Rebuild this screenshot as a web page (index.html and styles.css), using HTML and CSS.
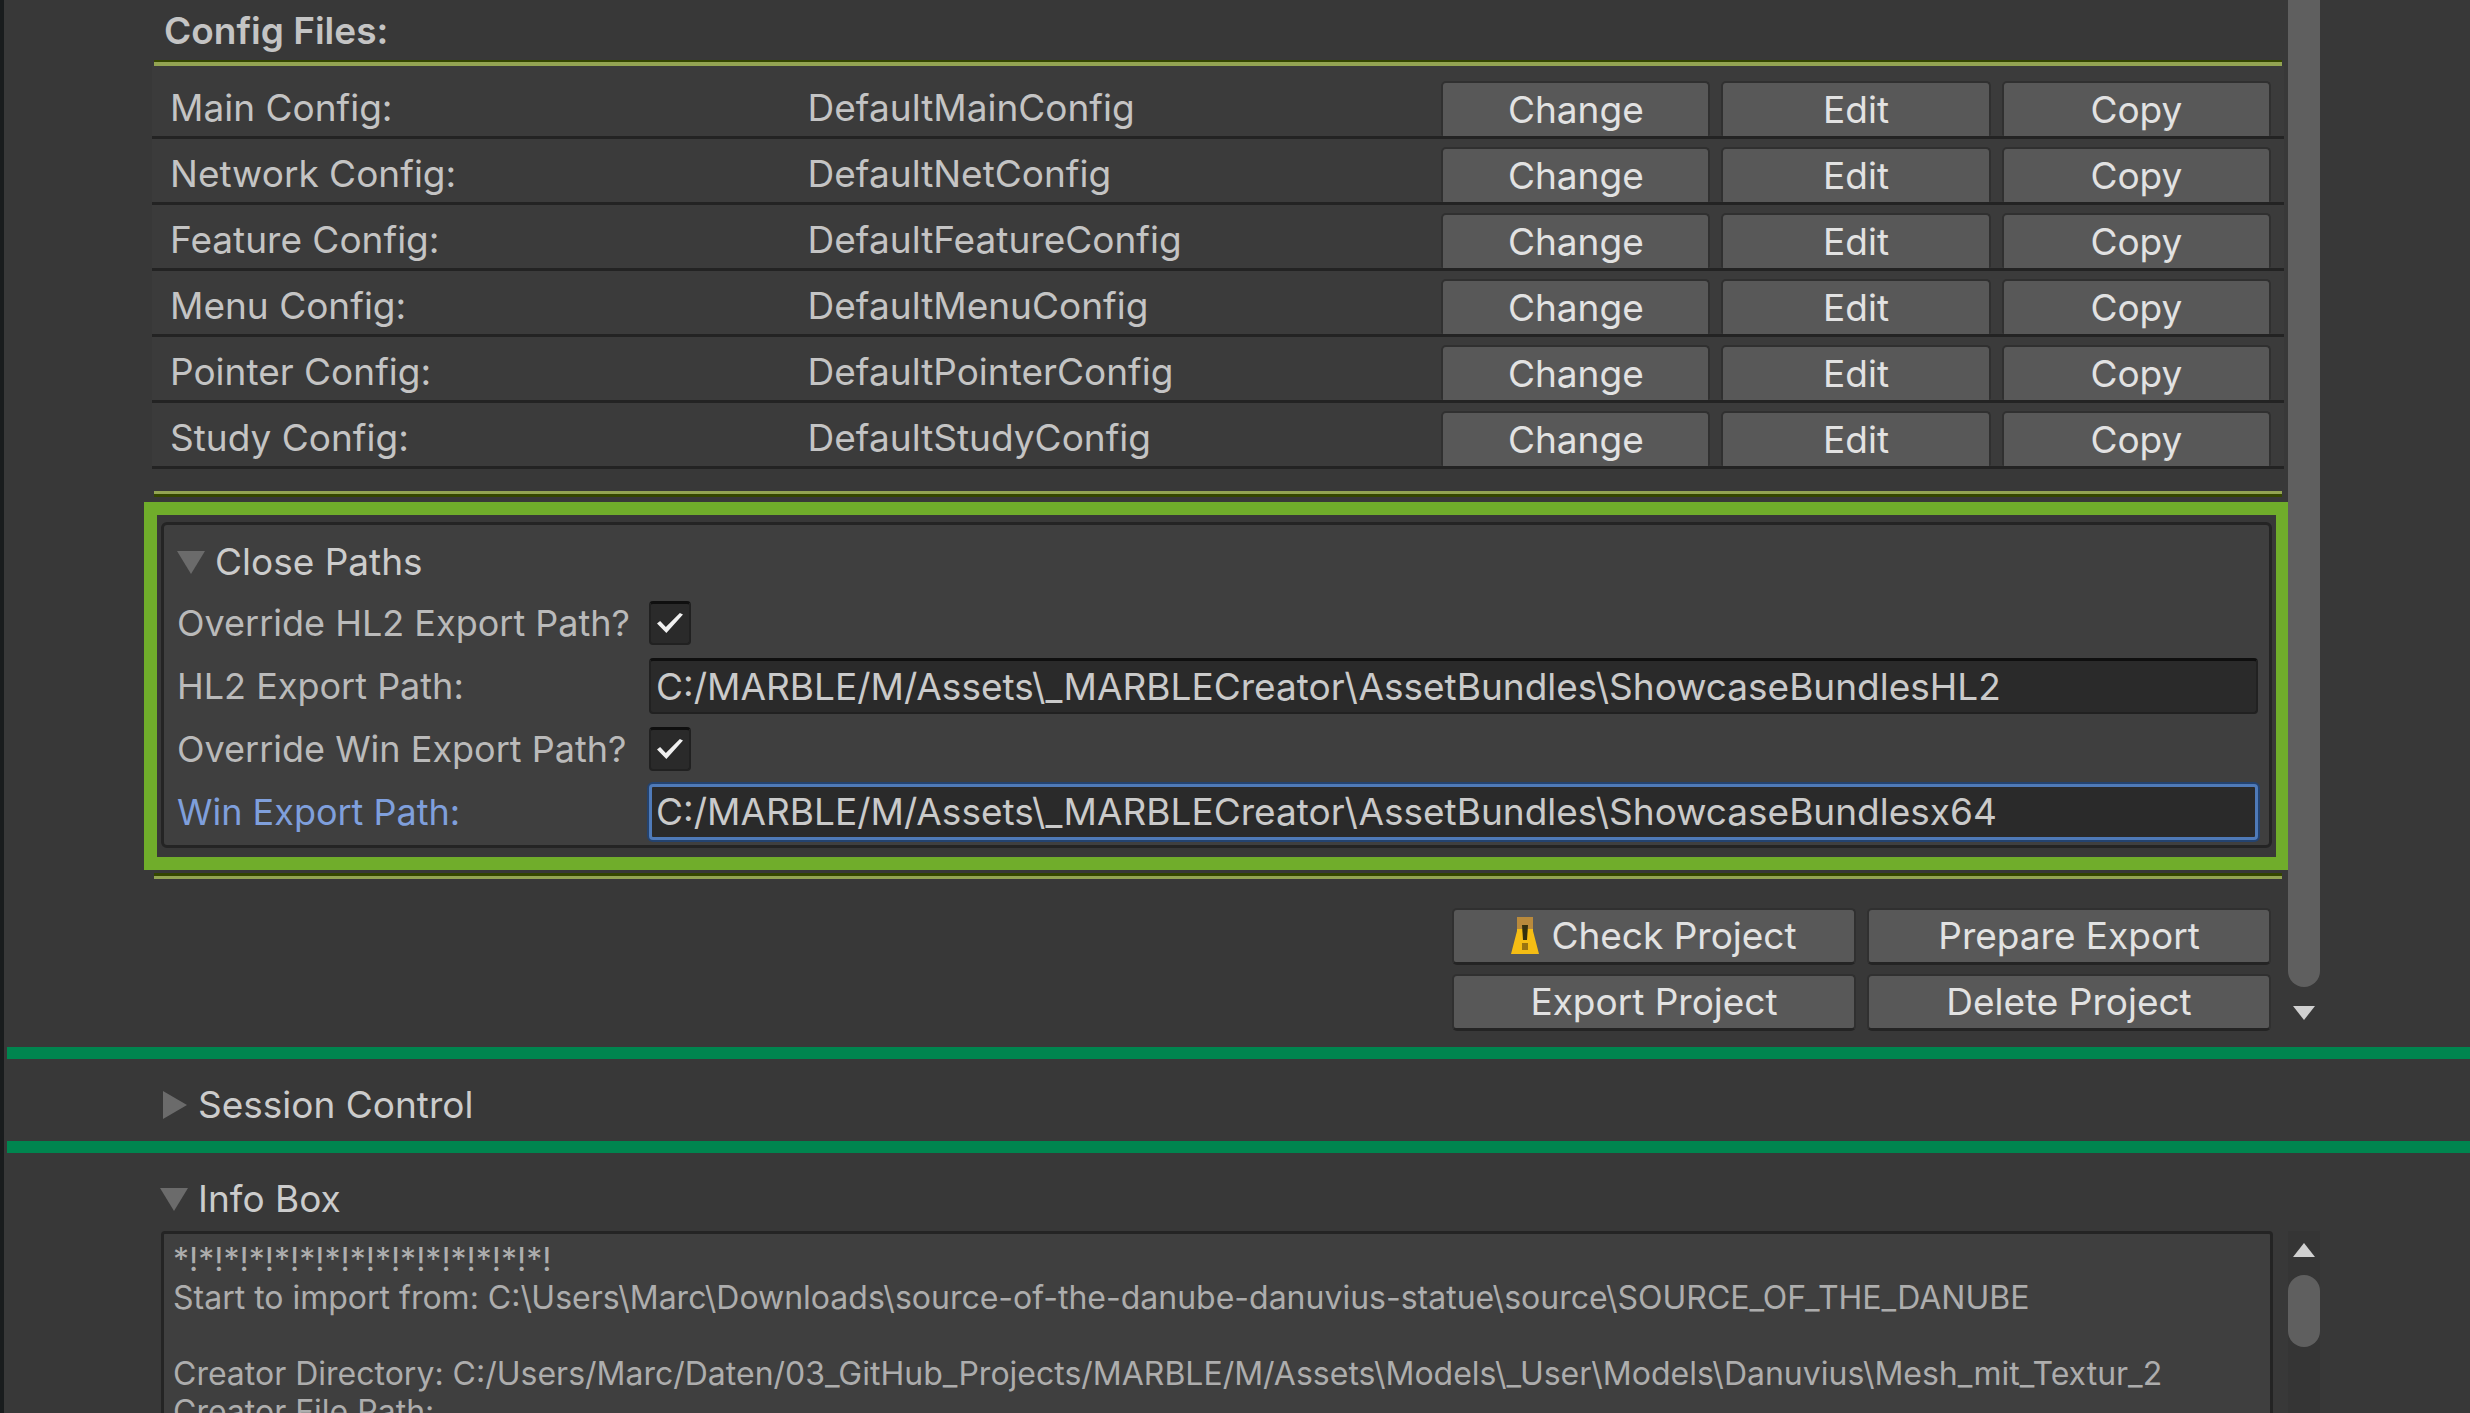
FILE: index.html
```html
<!DOCTYPE html>
<html lang="en">
<head>
<meta charset="utf-8">
<title>Creator Window</title>
<link rel="stylesheet" href="styles.css">
</head>
<body>
<div class="window">
  <main class="view project">
    <div class="content">
      <h2 class="heading">Config Files:</h2>
      <div class="rule"></div>
      <table class="configs">
        <colgroup><col class="col-name"><col class="col-value"><col class="col-actions"></colgroup>
        <tbody>
          <tr><th scope="row">Main Config:</th><td>DefaultMainConfig</td><td class="actions"><div class="trio"><button>Change</button><button>Edit</button><button>Copy</button></div></td></tr>
          <tr><th scope="row">Network Config:</th><td>DefaultNetConfig</td><td class="actions"><div class="trio"><button>Change</button><button>Edit</button><button>Copy</button></div></td></tr>
          <tr><th scope="row">Feature Config:</th><td>DefaultFeatureConfig</td><td class="actions"><div class="trio"><button>Change</button><button>Edit</button><button>Copy</button></div></td></tr>
          <tr><th scope="row">Menu Config:</th><td>DefaultMenuConfig</td><td class="actions"><div class="trio"><button>Change</button><button>Edit</button><button>Copy</button></div></td></tr>
          <tr><th scope="row">Pointer Config:</th><td>DefaultPointerConfig</td><td class="actions"><div class="trio"><button>Change</button><button>Edit</button><button>Copy</button></div></td></tr>
          <tr><th scope="row">Study Config:</th><td>DefaultStudyConfig</td><td class="actions"><div class="trio"><button>Change</button><button>Edit</button><button>Copy</button></div></td></tr>
        </tbody>
      </table>
      <div class="rule rule-top"></div>
      <section class="highlight">
        <div class="paths">
          <button class="foldout paths-title"><svg class="tri" viewBox="0 0 28 28"><path d="M0 3h28L14 26z"/></svg>Close Paths</button>
          <div class="field"><label for="ohl2">Override HL2 Export Path?</label><input type="checkbox" id="ohl2" checked></div>
          <div class="field"><label for="hl2">HL2 Export Path:</label><input type="text" id="hl2" value="C:/MARBLE/M/Assets\_MARBLECreator\AssetBundles\ShowcaseBundlesHL2"></div>
          <div class="field"><label for="owin">Override Win Export Path?</label><input type="checkbox" id="owin" checked></div>
          <div class="field active"><label for="win">Win Export Path:</label><input type="text" id="win" value="C:/MARBLE/M/Assets\_MARBLECreator\AssetBundles\ShowcaseBundlesx64"></div>
        </div>
      </section>
      <div class="rule rule-bottom"></div>
      <div class="project-actions">
        <button><svg class="warn" viewBox="0 0 28 38"><path d="M6 0h16v14l6 23H0L6 14z" fill="#f5bd14"/><path d="M6 0h16v12H6z" fill="#b98a3c"/><path d="M11 8h6l-1 15h-4z" fill="#33300f"/><path d="M11 26h6v7h-6z" fill="#9a7410"/></svg>Check Project</button>
        <button>Prepare Export</button>
        <button>Export Project</button>
        <button>Delete Project</button>
      </div>
    </div>
    <div class="scrollbar">
      <div class="thumb thumb-long"></div>
      <svg class="arrow" viewBox="0 0 22 14"><path d="M0 0h22L11 14z"/></svg>
    </div>
  </main>
  <section class="session">
    <button class="foldout"><svg class="tri" viewBox="0 0 28 28"><path d="M3 0v28L27 14z"/></svg>Session Control</button>
  </section>
  <section class="info">
    <button class="foldout"><svg class="tri" viewBox="0 0 28 28"><path d="M0 3h28L14 26z"/></svg>Info Box</button>
    <div class="view log-view">
      <pre class="log">*!*!*!*!*!*!*!*!*!*!*!*!*!*!*!
Start to import from: C:\Users\Marc\Downloads\source-of-the-danube-danuvius-statue\source\SOURCE_OF_THE_DANUBE

Creator Directory: C:/Users/Marc/Daten/03_GitHub_Projects/MARBLE/M/Assets\Models\_User\Models\Danuvius\Mesh_mit_Textur_2
Creator File Path:</pre>
      <div class="scrollbar track">
        <svg class="arrow" viewBox="0 0 22 14"><path d="M0 14h22L11 0z"/></svg>
        <div class="thumb thumb-short"></div>
      </div>
    </div>
  </section>
</div>
</body>
</html>
```
FILE: styles.css
```css
* { box-sizing: border-box; }

body {
  margin: 0;
  background: #383838;
  color: #c4c4c4;
  font: 400 37px/44px Inter, "Liberation Sans", sans-serif;
}

.window {
  display: flex;
  flex-direction: column;
  height: 100vh;
  overflow: hidden;
  border-left: 4px solid #191c1d;
}

button {
  font: inherit;
  color: #e2e2e2;
  background: #585858;
  border: 2px solid #303030;
  border-bottom: 3px solid #242424;
  border-radius: 5px;
  padding: 0;
}

.view {
  display: flex;
  gap: 4px;
  padding: 0 150px 0 148px;
}

.content { flex: 1; min-width: 0; }

.heading {
  margin: 0;
  height: 60px;
  padding: 9px 0 0 12px;
  font-size: 37px;
  font-weight: 600;
  line-height: 44px;
}

.rule {
  height: 6px;
  margin: 0 2px;
  background: #93a452;
  border-top: 2px solid #344600;
}
.rule-top {
  margin: 22px 2px 5px;
  border-top: 0;
  border-bottom: 3px solid #344600;
}
.rule-bottom { margin: 3px 2px 29px; border-top-width: 3px; }

/* Config table */
.configs {
  width: 100%;
  table-layout: fixed;
  border-spacing: 0;
  background: #3b3b3b;
  padding-top: 7px;
}
.col-name { width: 30%; }
.col-value { width: 30%; }
.configs th, .configs td {
  height: 66px;
  padding: 6px 0 0 16px;
  border-bottom: 3px solid #232323;
  font-weight: 400;
  text-align: left;
  white-space: nowrap;
}
.configs th { padding-left: 18px; }
.configs .actions { padding: 8px 13px 0 10px; }
.trio {
  display: grid;
  grid-template-columns: repeat(3, 1fr);
  gap: 11px;
}
.trio button { height: 55px; border-bottom: 0; border-radius: 5px 5px 2px 2px; }

/* Export paths */
.highlight {
  margin: 0 -5px 0 -8px;
  border: 13px solid #70ad2b;
  padding: 7px 4px 9px;
}
.paths {
  background: #3f3f3f;
  border: 3px solid #242424;
  border-radius: 6px;
  padding: 15px 11px 2px 13px;
}
.foldout {
  display: flex;
  align-items: center;
  gap: 10px;
  height: 44px;
  padding: 0;
  border: 0;
  background: none;
  color: #cccccc;
}
.tri { width: 28px; height: 28px; fill: #6b6b6b; }
.paths-title { margin-bottom: 7px; }

.field {
  display: grid;
  grid-template-columns: 472px 1fr;
  align-items: center;
  height: 63px;
  color: #bababa;
}
.field label { font-size: 36px; }
.field input {
  appearance: none;
  margin: 0;
  background: #2a2a2a;
  border: 2px solid #212121;
  border-top: 3px solid #0f0f0f;
  border-radius: 4px;
}
.field input[type="text"] {
  width: 100%;
  height: 56px;
  padding: 0 5px;
  font: inherit;
  color: #cacaca;
}
.field input[type="checkbox"] {
  display: grid;
  place-items: center;
  width: 42px;
  height: 44px;
}
.field input[type="checkbox"]:checked::before {
  content: "";
  width: 26px;
  height: 20px;
  background: #f0f0f0;
  clip-path: polygon(0 52%, 12% 40%, 34% 70%, 88% 0, 100% 8%, 36% 100%);
}
.active label { color: #7f9fdc; }
.active input[type="text"] {
  padding: 0 4px;
  border: 3px solid #4f7ab8;
  box-shadow: 0 0 0 2px #24436f;
}

/* Project buttons */
.project-actions {
  display: grid;
  grid-template-columns: 404px 404px;
  justify-content: end;
  gap: 9px 11px;
  padding-right: 13px;
}
.project-actions button {
  display: flex;
  align-items: center;
  justify-content: center;
  gap: 12px;
  height: 57px;
}
.warn { width: 28px; height: 38px; }

/* Scrollbars */
.scrollbar {
  display: flex;
  flex-direction: column;
  align-items: center;
  width: 32px;
}
.thumb { width: 32px; background: #5f5f5f; }
.thumb-long { height: 987px; border-radius: 0 0 16px 16px; margin-bottom: 19px; }
.thumb-short { height: 72px; border-radius: 16px; }
.track { background: #353535; padding-top: 12px; gap: 18px; }
.arrow { width: 22px; height: 14px; fill: #d0d0d0; }

.project { height: 1047px; flex: none; }

.session {
  flex: none;
  margin-left: 3px;
  height: 106px;
  padding: 24px 0 0 153px;
  border: solid #00854f;
  border-width: 12px 0;
}

.info {
  flex: 1;
  min-height: 0;
  display: flex;
  flex-direction: column;
  padding-top: 24px;
}
.info .foldout { margin: 0 0 10px 156px; }
.log-view { flex: 1; min-height: 0; padding-left: 157px; gap: 15px; }
.log {
  flex: 1;
  min-width: 0;
  margin: 0;
  padding: 7px 9px;
  overflow: hidden;
  background: #3f3f3f;
  border: 3px solid #242424;
  border-bottom: 0;
  border-radius: 4px 4px 0 0;
  color: #adadad;
  font: 400 32px/38px Inter, "Liberation Sans", sans-serif;
}
```
